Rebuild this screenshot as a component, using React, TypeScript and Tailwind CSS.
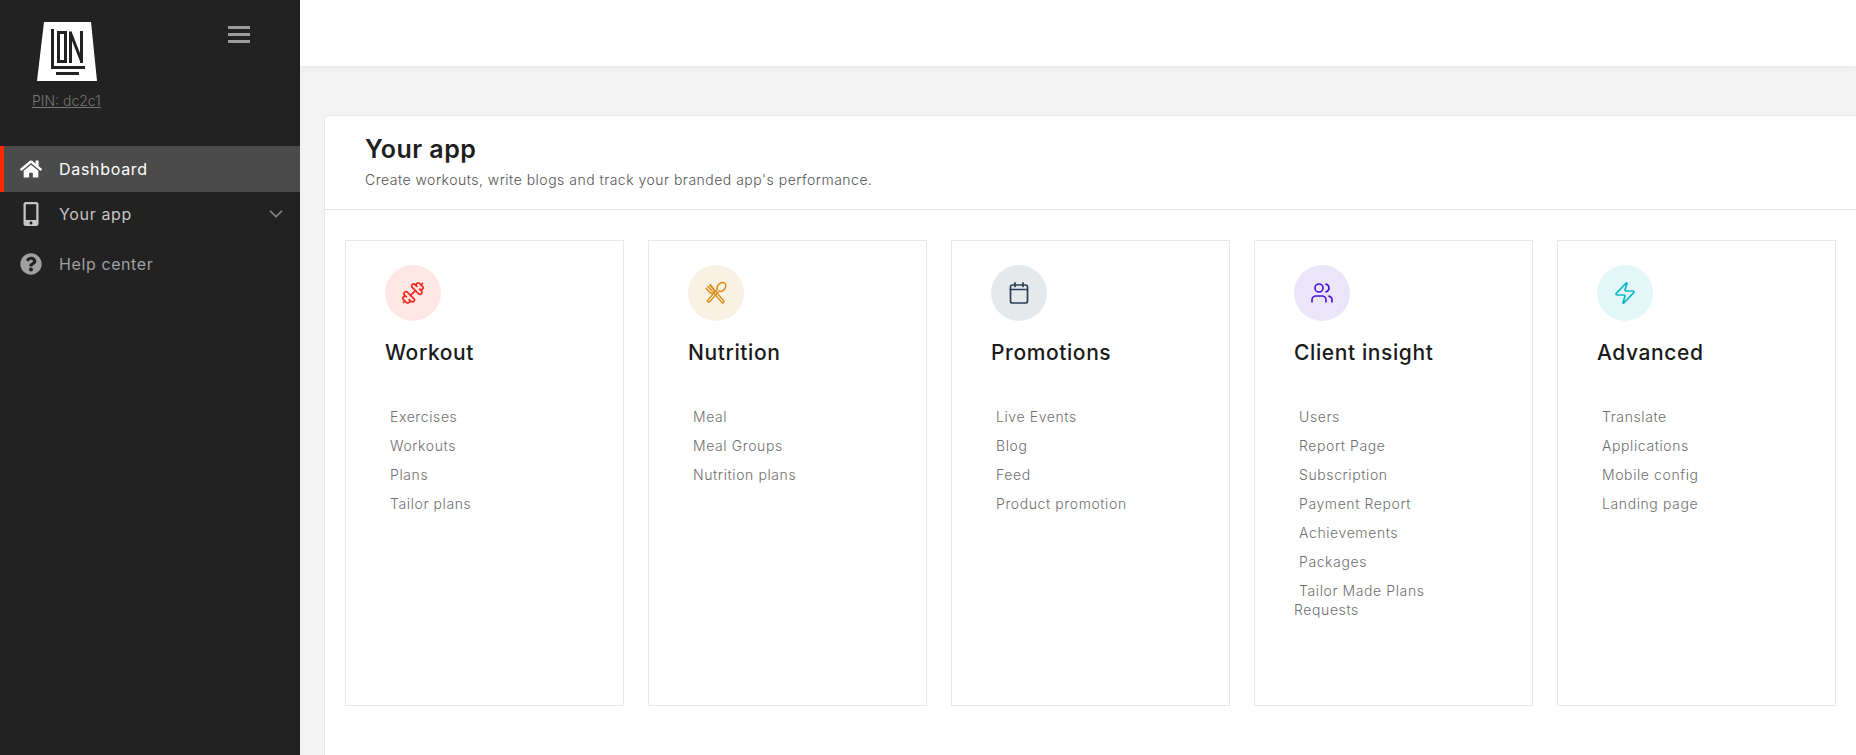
import { ChevronDown, Dumbbell, Users, Zap } from "lucide-react";
import { FaHome, FaMobileAlt, FaQuestionCircle } from "react-icons/fa";

const SECTIONS = [
  { title: "Workout", circle: "bg-[#ffe7e6]", icon: "workout", items: ["Exercises", "Workouts", "Plans", "Tailor plans"] },
  { title: "Nutrition", circle: "bg-[#faf1e5]", icon: "nutrition", items: ["Meal", "Meal Groups", "Nutrition plans"] },
  { title: "Promotions", circle: "bg-[#e6e9ec]", icon: "promotions", items: ["Live Events", "Blog", "Feed", "Product promotion"] },
  {
    title: "Client insight",
    circle: "bg-[#eae5f8]",
    icon: "client",
    items: ["Users", "Report Page", "Subscription", "Payment Report", "Achievements", "Packages", "Tailor Made Plans Requests"],
  },
  { title: "Advanced", circle: "bg-[#e3f6f8]", icon: "advanced", items: ["Translate", "Applications", "Mobile config", "Landing page"] },
];

function Logo() {
  return (
    <svg viewBox="0 0 60 60" className="h-[60px] w-[60px]">
      <polygon points="7,0 54,0 60,59 0,59" fill="#fff" />
      <g fill="none" stroke="#222" strokeWidth="3">
        <path d="M15.5 7V45.5H48" />
        <rect x="21.5" y="10.5" width="7" height="29" />
        <path d="M33.5 41V9.5M33.5 11L44.5 39M44.5 41V9" />
      </g>
      <rect x="19" y="50" width="23" height="3" fill="#222" />
    </svg>
  );
}

function ForkSpoon() {
  return (
    <svg viewBox="0 0 24 24" className="h-6 w-6" fill="none" stroke="#dc8c14" strokeWidth="1.4" strokeLinejoin="round">
      <path d="M3.5 5l5 5.5M5.5 3.5l4.5 5.5M1.8 7l3.7 4.2c1.2 1.3 2.8 1.2 3.9.2 1-1 1.1-2.5.1-3.7L6 3.2" />
      <path d="M9.4 11.6l8.6 10c.9.9 2.6-.4 1.8-1.6l-8.9-10.6" />
      <path d="M20.8 2.2c1.6 1.3 1.2 4.4-.5 6.3-1.6 1.8-3.8 2.3-5 1.4L5.6 20.7c-1 1-2.8-.3-1.9-1.6l9.8-11c-.8-1.3-.2-3.3 1.2-4.7 2-1.9 4.6-2.2 6.1-1.2z" />
    </svg>
  );
}

function CalendarIcon() {
  return (
    <svg viewBox="0 0 24 24" className="h-6 w-6" fill="none" stroke="#2d3f57" strokeWidth="1.7" strokeLinecap="round">
      <rect x="3.5" y="4" width="17" height="18" rx="2" />
      <path d="M3.5 8.5h17M8 1.8v3.7M16 1.8v3.7" />
    </svg>
  );
}

function SectionIcon({ name }: { name: string }) {
  if (name === "workout") return <Dumbbell className="h-6 w-6 text-[#f8281c]" strokeWidth={1.7} />;
  if (name === "nutrition") return <ForkSpoon />;
  if (name === "promotions") return <CalendarIcon />;
  if (name === "client") return <Users className="h-6 w-6 text-[#4a12d8]" strokeWidth={1.6} />;
  return <Zap className="h-6 w-6 text-[#12b8c8]" strokeWidth={1.7} />;
}

export default function App() {
  return (
    <div className="flex h-[755px] w-full overflow-hidden bg-[#f3f3f3] font-['Inter','Liberation_Sans',sans-serif]">
      {/* Sidebar */}
      <aside className="flex w-[300px] shrink-0 flex-col bg-[#222222]">
        <div className="relative h-[146px] shrink-0 pl-[32px] pt-[22px]">
          <div className="ml-[5px]">
            <Logo />
          </div>
          <a className="mt-[9px] block w-[72px] text-[14px] font-light leading-[20px] text-[#767676] underline">PIN: dc2c1</a>
          <div className="absolute left-[228px] top-[26px] flex w-[22px] flex-col gap-[4px]">
            <span className="h-[3px] bg-[#9c9c9c]" />
            <span className="h-[3px] bg-[#9c9c9c]" />
            <span className="h-[3px] bg-[#9c9c9c]" />
          </div>
        </div>
        <nav className="flex flex-col">
          <div className="flex h-[46px] items-center border-l-4 border-[#ff2a00] bg-[#4b4b4b] pb-[1px] pl-[16px] text-white">
            <FaHome className="h-[22px] w-[22px]" />
            <span className="ml-[17px] text-[16px] tracking-[0.7px]">Dashboard</span>
          </div>
          <div className="flex h-[44px] items-center pl-[20px] pr-[13px] text-[#c4c4c4]">
            <FaMobileAlt className="h-[24px] w-[22px]" />
            <span className="ml-[17px] flex-1 text-[16px] tracking-[0.65px]">Your app</span>
            <ChevronDown className="h-[22px] w-[22px] text-[#8f8f8f]" strokeWidth={1.7} />
          </div>
          <div className="mt-[6px] flex h-[44px] items-center pl-[20px] text-[#a0a0a0]">
            <FaQuestionCircle className="h-[22px] w-[22px]" />
            <span className="ml-[17px] text-[16px] tracking-[0.6px]">Help center</span>
          </div>
        </nav>
      </aside>

      {/* Main */}
      <main className="flex min-w-0 flex-1 flex-col">
        <div className="h-[66px] shrink-0 bg-white shadow-[0_2px_8px_rgba(0,0,0,0.05)]" />
        <div className="flex-1 pl-[24px] pt-[49px]">
          <div className="h-[700px] w-[1600px] rounded-tl-[5px] border-l border-t border-[#e6e6e6] bg-white">
            <div className="h-[94px] border-b border-[#e2e2e2] pl-[40px] pt-[17px]">
              <h1 className="text-[25px] font-semibold leading-[32px] tracking-[0.45px] text-[#1e1e1e]">Your app</h1>
              <p className="mt-[5px] text-[14px] font-light leading-[20px] tracking-[0.49px] text-[#555555]">
                Create workouts, write blogs and track your branded app's performance.
              </p>
            </div>
            <div className="flex gap-[24px] pl-[20px] pt-[30px]">
              {SECTIONS.map((s) => (
                <section key={s.title} className="h-[466px] w-[279px] shrink-0 border border-[#e8e8e8] pl-[39px] pr-[45px] pt-[24px]">
                  <div className={`flex h-[56px] w-[56px] items-center justify-center rounded-full ${s.circle}`}>
                    <SectionIcon name={s.icon} />
                  </div>
                  <h2 className="mt-[18px] whitespace-nowrap text-[21px] font-medium leading-[28px] tracking-[0.6px] text-[#1a1a1a]">{s.title}</h2>
                  <ul className="mt-[40px] flex flex-col gap-[10px] text-[14px] font-light leading-[19px] tracking-[0.6px] text-[#6f6f6f]">
                    {s.items.map((item) => (
                      <li key={item}>
                        <a className="before:inline-block before:w-[5px]">{item}</a>
                      </li>
                    ))}
                  </ul>
                </section>
              ))}
            </div>
          </div>
        </div>
      </main>
    </div>
  );
}
